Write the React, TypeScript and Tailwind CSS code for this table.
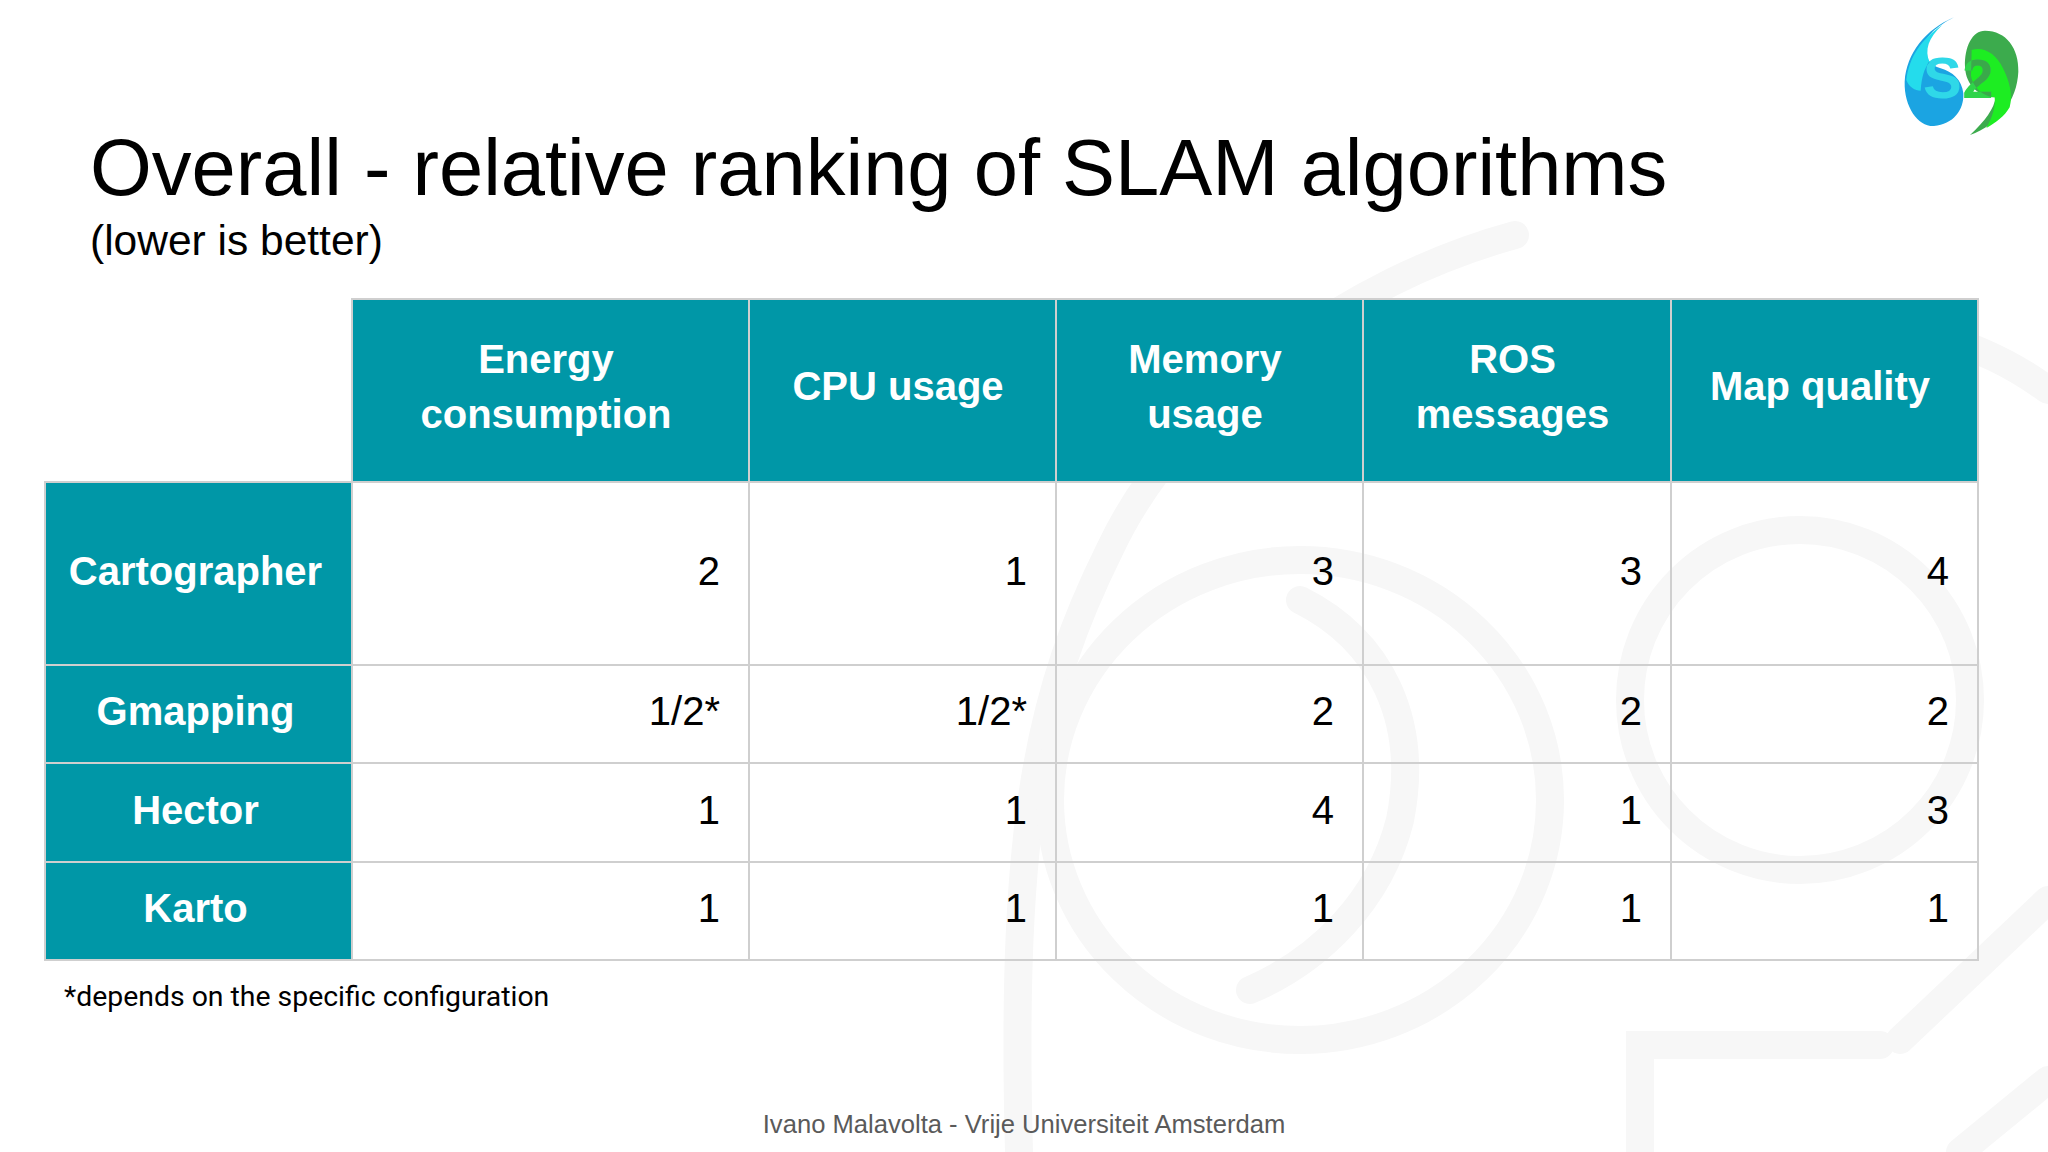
import React from "react";

const HEADERS: React.ReactNode[] = [
  <>Energy<br />consumption</>,
  "CPU usage",
  <>Memory<br />usage</>,
  <>ROS<br />messages</>,
  "Map quality",
];

const ROWS = [
  { name: "Cartographer", height: "h-[183px]", values: ["2", "1", "3", "3", "4"] },
  { name: "Gmapping", height: "h-[98px]", values: ["1/2*", "1/2*", "2", "2", "2"] },
  { name: "Hector", height: "h-[99px]", values: ["1", "1", "4", "1", "3"] },
  { name: "Karto", height: "h-[98px]", values: ["1", "1", "1", "1", "1"] },
];

const COL_WIDTHS = ["w-[307px]", "w-[397px]", "w-[307px]", "w-[307px]", "w-[308px]", "w-[307px]"];

const CYAN_PART =
  "M250,75 C190,115 150,170 142,240 C150,262 168,272 185,272 C188,232 195,205 212,186 C196,152 208,112 250,75 Z";
const BRIGHT_PART =
  "M338,150 C372,138 412,160 432,205 C452,245 462,285 452,322 C436,350 410,368 382,384 C400,352 410,322 407,292 C372,290 342,262 336,228 Z";

function Logo() {
  const font = "Liberation Sans, Arial, sans-serif";
  return (
    <svg
      className="absolute left-[1858px] top-0"
      width={190}
      height={160}
      viewBox="0 0 564 480"
    >
      <defs>
        <clipPath id="cyan-part">
          <path d={CYAN_PART} />
        </clipPath>
        <clipPath id="bright-part">
          <path d={BRIGHT_PART} />
        </clipPath>
      </defs>
      {/* blue drop */}
      <path
        d="M285,52 C200,88 142,160 137,245 C135,322 178,380 225,378 C282,374 316,330 313,280 C309,240 280,215 245,205 C215,195 190,175 192,150 C195,110 235,78 285,52 Z"
        fill="#1ba4e2"
      />
      <path d={CYAN_PART} fill="#24dcec" />
      {/* green drop */}
      <path
        d="M378,92 C442,92 480,145 478,215 C474,302 420,372 333,405 C380,362 405,326 410,292 C360,292 320,255 318,200 C316,140 340,92 378,92 Z"
        fill="#3cab4d"
      />
      <path d={BRIGHT_PART} fill="#1ded22" />
      {/* letters */}
      <text x={192} y={294} fontFamily={font} fontWeight={700} fontSize={174} fill="#2fd8e8">
        S
      </text>
      <g clipPath="url(#cyan-part)">
        <text x={192} y={294} fontFamily={font} fontWeight={700} fontSize={174} fill="#1b9fdc">
          S
        </text>
      </g>
      <text x={310} y={294} fontFamily={font} fontWeight={700} fontSize={168} fill="#2fd44a">
        2
      </text>
      <g clipPath="url(#bright-part)">
        <text x={310} y={294} fontFamily={font} fontWeight={700} fontSize={168} fill="#3aa94a">
          2
        </text>
      </g>
    </svg>
  );
}

function Watermark() {
  return (
    <svg className="absolute inset-0" width={2048} height={1152} viewBox="0 0 2048 1152">
      <g fill="none" stroke="#f7f7f7" strokeWidth={28} strokeLinecap="round">
        <path d="M1515,235 C1350,280 1180,400 1110,549 C1040,690 1010,820 1019,1152" />
        <ellipse cx={1300} cy={800} rx={250} ry={240} />
        <circle cx={1800} cy={700} r={170} />
        <path d="M1640,1152 L1640,1045 L1880,1045" />
        <path d="M1900,1040 L2048,900" />
        <path d="M1960,1152 L2048,1080" />
        <path d="M2048,390 C1980,340 1900,320 1830,330" />
        <path d="M1300,600 C1380,640 1420,720 1400,820 C1380,900 1320,960 1250,990" />
      </g>
    </svg>
  );
}

export default function App() {
  return (
    <div className="relative flex h-[1152px] w-[2048px] flex-col overflow-hidden bg-white font-['Liberation_Sans',Arial,sans-serif] text-black">
      <Watermark />
      <Logo />

      {/* title */}
      <div className="relative flex flex-col pl-[90px] pt-[128px]">
        <h1 className="whitespace-nowrap text-[79.5px] leading-none">
          Overall - relative ranking of SLAM algorithms
        </h1>
        <p className="mt-3 text-[42.5px] leading-none">(lower is better)</p>
      </div>

      {/* table */}
      <div className="relative ml-[44px] mt-9">
        <table className="table-fixed border-collapse">
          <colgroup>
            {COL_WIDTHS.map((w, i) => (
              <col key={i} className={w} />
            ))}
          </colgroup>
          <thead>
            <tr className="h-[183px]">
              <th className="border-0 p-0" />
              {HEADERS.map((h, i) => (
                <th
                  key={i}
                  className="whitespace-nowrap border-2 border-[#cfcfcf] bg-[#0097a7] pb-2 pl-0 pr-[9px] text-center align-middle text-[40px] font-bold leading-[55px] text-white"
                >
                  {h}
                </th>
              ))}
            </tr>
          </thead>
          <tbody>
            {ROWS.map((row) => (
              <tr key={row.name} className={row.height}>
                <td className="border-2 border-[#cfcfcf] bg-[#0097a7] pb-[6px] pl-0 pr-[6px] pt-0 text-center align-middle text-[40px] font-bold leading-none text-white">
                  {row.name}
                </td>
                {row.values.map((v, i) => (
                  <td
                    key={i}
                    className="border-2 border-[#cfcfcf] pb-[6px] pl-0 pr-[28px] pt-0 text-right align-middle text-[40px] leading-none"
                  >
                    {v}
                  </td>
                ))}
              </tr>
            ))}
          </tbody>
        </table>
      </div>

      <p className="relative ml-[64px] mt-[22px] font-['Roboto',sans-serif] text-[28.4px] leading-none">
        *depends on the specific configuration
      </p>

      <p className="relative mt-auto pb-[14px] text-center text-[25.6px] leading-none text-[#5a5a5a]">
        Ivano Malavolta - Vrije Universiteit Amsterdam
      </p>
    </div>
  );
}
